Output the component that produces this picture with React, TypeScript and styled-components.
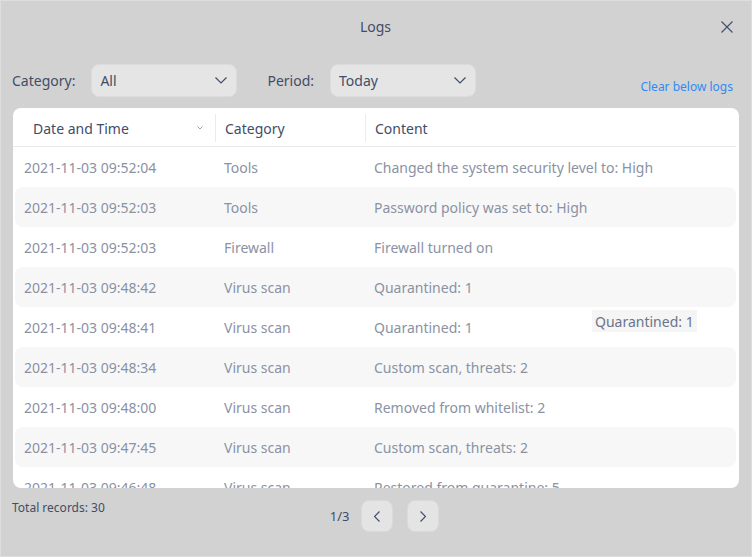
import React from "react";
import styled, { createGlobalStyle } from "styled-components";

const GlobalStyle = createGlobalStyle`
  html, body {
    margin: 0;
    padding: 0;
    background: #d2d2d2;
  }
  * {
    box-sizing: border-box;
  }
`;

const Window = styled.div`
  width: 752px;
  height: 557px;
  display: flex;
  flex-direction: column;
  padding: 0 12px 0 11px;
  background: #d2d2d2;
  border: 1px solid #dedede;
  font-family: "Noto Sans", sans-serif;
  color: #414d68;
  overflow: hidden;
`;

const TitleBar = styled.div`
  position: relative;
  height: 51px;
  display: flex;
  align-items: center;
  justify-content: center;
  font-size: 14px;
  font-stretch: condensed;
`;

const CloseButton = styled.button`
  position: absolute;
  right: 0;
  top: 14px;
  width: 24px;
  height: 24px;
  padding: 0;
  border: none;
  background: none;
  display: flex;
  align-items: center;
  justify-content: center;
  color: #414d68;
`;

const FilterRow = styled.div`
  margin-top: 12px;
  display: flex;
  align-items: center;
  height: 32px;
`;

const Label = styled.span<{ $gap?: number }>`
  font-size: 14px;
  font-stretch: condensed;
  margin-left: ${(p) => p.$gap ?? 0}px;
  margin-right: 16px;
`;

const Select = styled.div`
  width: 146px;
  height: 33px;
  display: flex;
  align-items: center;
  justify-content: space-between;
  padding: 0 9px 0 8px;
  background: #e5e5e5;
  border: 1px solid #dcdcdc;
  border-radius: 8px;
  font-size: 14px;
  font-stretch: condensed;
  color: #414d68;
`;

const ClearLink = styled.a`
  margin-left: auto;
  margin-right: 6px;
  align-self: flex-end;
  margin-bottom: 1px;
  font-size: 12px;
  font-stretch: condensed;
  color: #2f8af5;
  text-decoration: none;
`;

const Card = styled.div`
  position: relative;
  margin-top: 12px;
  margin-left: 1px;
  height: 380px;
  background: #ffffff;
  border-radius: 8px;
  overflow: hidden;
  display: flex;
  flex-direction: column;
`;

const HeaderRow = styled.div`
  display: grid;
  grid-template-columns: 202px 150px 1fr;
  height: 39px;
  margin: 0 3px 0 0;
  border-bottom: 1px solid #e9e9e9;
`;

const HeaderCell = styled.div<{ $first?: boolean }>`
  display: flex;
  align-items: center;
  justify-content: space-between;
  padding-left: ${(p) => (p.$first ? 20 : 9)}px;
  padding-right: 12px;
  margin: 6px 0 4px;
  font-size: 14px;
  color: #414d68;
  border-left: ${(p) => (p.$first ? "none" : "1px solid #ececec")};
`;

const Body = styled.div`
  flex: 1;
  overflow: hidden;
  padding: 0 3px 0 2px;
`;

const Row = styled.div<{ $alt: boolean }>`
  display: grid;
  grid-template-columns: 200px 150px 1fr;
  height: 40px;
  align-items: center;
  padding-left: 9px;
  background: ${(p) => (p.$alt ? "#f7f7f7" : "transparent")};
  border-radius: 8px;
  font-size: 14px;
  color: #8a92a4;
  white-space: nowrap;
`;

const Tooltip = styled.div`
  position: absolute;
  left: 579px;
  top: 202px;
  height: 22px;
  padding: 0 3px;
  display: flex;
  align-items: center;
  background: #f5f5f6;
  font-size: 14px;
  color: #6b7489;
`;

const Footer = styled.div`
  display: flex;
  align-items: flex-start;
  padding-top: 11px;
`;

const Total = styled.span`
  font-size: 12px;
  font-stretch: condensed;
`;

const Pager = styled.div`
  margin-left: 225px;
  margin-top: 1px;
  display: flex;
  align-items: center;
  gap: 14px;
  font-size: 13px;
  font-stretch: condensed;
`;

const PageButton = styled.button`
  width: 32px;
  height: 32px;
  padding: 0;
  display: flex;
  align-items: center;
  justify-content: center;
  background: #e4e4e4;
  border: 1px solid #dadada;
  border-radius: 8px;
  color: #414d68;
`;

const PageInfo = styled.span`
  margin-right: -3px;
`;

const Chevron = ({ dir }: { dir: "down" | "left" | "right" }) => {
  if (dir === "down")
    return (
      <svg width="12" height="7" viewBox="0 0 12 7">
        <path d="M0.5 0.5 L6 6 L11.5 0.5" fill="none" stroke="#414d68" strokeWidth="1.2" />
      </svg>
    );
  const d = dir === "left" ? "M5.5 0.5 L0.5 5.5 L5.5 10.5" : "M0.5 0.5 L5.5 5.5 L0.5 10.5";
  return (
    <svg width="6" height="11" viewBox="0 0 6 11">
      <path d={d} fill="none" stroke="#414d68" strokeWidth="1.2" />
    </svg>
  );
};

const SortArrow = () => (
  <svg width="6" height="4" viewBox="0 0 6 4">
    <path d="M0.5 0.5 L3 3 L5.5 0.5" fill="none" stroke="#9aa1b0" strokeWidth="1" />
  </svg>
);

const logs = [
  ["2021-11-03 09:52:04", "Tools", "Changed the system security level to: High"],
  ["2021-11-03 09:52:03", "Tools", "Password policy was set to: High"],
  ["2021-11-03 09:52:03", "Firewall", "Firewall turned on"],
  ["2021-11-03 09:48:42", "Virus scan", "Quarantined: 1"],
  ["2021-11-03 09:48:41", "Virus scan", "Quarantined: 1"],
  ["2021-11-03 09:48:34", "Virus scan", "Custom scan, threats: 2"],
  ["2021-11-03 09:48:00", "Virus scan", "Removed from whitelist: 2"],
  ["2021-11-03 09:47:45", "Virus scan", "Custom scan, threats: 2"],
  ["2021-11-03 09:46:48", "Virus scan", "Restored from quarantine: 5"],
];

export default function App() {
  return (
    <>
      <GlobalStyle />
      <Window>
        <TitleBar>
          Logs
          <CloseButton aria-label="Close">
            <svg width="12" height="12" viewBox="0 0 12 12">
              <path d="M0.5 0.5 L11.5 11.5 M11.5 0.5 L0.5 11.5" stroke="#414d68" strokeWidth="1.1" />
            </svg>
          </CloseButton>
        </TitleBar>

        <FilterRow>
          <Label>Category:</Label>
          <Select>
            <span>All</span>
            <Chevron dir="down" />
          </Select>
          <Label $gap={30}>Period:</Label>
          <Select>
            <span>Today</span>
            <Chevron dir="down" />
          </Select>
          <ClearLink href="#">Clear below logs</ClearLink>
        </FilterRow>

        <Card>
          <HeaderRow>
            <HeaderCell $first>
              Date and Time
              <SortArrow />
            </HeaderCell>
            <HeaderCell>Category</HeaderCell>
            <HeaderCell>Content</HeaderCell>
          </HeaderRow>
          <Body>
            {logs.map((log, i) => (
              <Row key={i} $alt={i % 2 === 1}>
                <span>{log[0]}</span>
                <span>{log[1]}</span>
                <span>{log[2]}</span>
              </Row>
            ))}
          </Body>
          <Tooltip>Quarantined: 1</Tooltip>
        </Card>

        <Footer>
          <Total>Total records: 30</Total>
          <Pager>
            <PageInfo>1/3</PageInfo>
            <PageButton aria-label="Previous">
              <Chevron dir="left" />
            </PageButton>
            <PageButton aria-label="Next">
              <Chevron dir="right" />
            </PageButton>
          </Pager>
        </Footer>
      </Window>
    </>
  );
}
